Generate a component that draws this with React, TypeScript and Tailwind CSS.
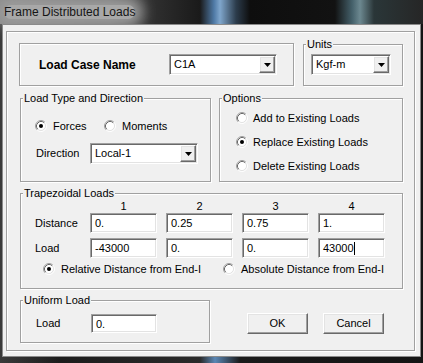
import React from 'react';

const etched = "border border-[#a0a0a0] shadow-[inset_1px_1px_0_#fff,1px_1px_0_#fff]";
const sunken =
  "border border-t-[#a0a0a0] border-l-[#a0a0a0] border-r-white border-b-white shadow-[inset_1px_1px_0_#696969,inset_-1px_-1px_0_#e3e3e3]";
const raised =
  "border border-t-white border-l-white border-r-[#696969] border-b-[#696969] shadow-[inset_-1px_-1px_0_#a0a0a0,inset_1px_1px_0_#e3e3e3]";

function RadioDot({ checked }: { checked?: boolean }) {
  return (
    <svg width="12" height="12" viewBox="0 0 12 12" className="shrink-0">
      <circle cx="6" cy="6" r="4.5" fill="#fff" />
      <path d="M2.11 9.89 A5.5 5.5 0 0 1 9.89 2.11" fill="none" stroke="#a0a0a0" />
      <path d="M9.89 2.11 A5.5 5.5 0 0 1 2.11 9.89" fill="none" stroke="#fff" />
      <path d="M2.82 9.18 A4.5 4.5 0 0 1 9.18 2.82" fill="none" stroke="#696969" />
      <path d="M9.18 2.82 A4.5 4.5 0 0 1 2.82 9.18" fill="none" stroke="#e3e3e3" />
      {checked && <circle cx="6" cy="6" r="2" fill="#000" />}
    </svg>
  );
}

function Radio({ label, checked, className = '', gap = 'ml-[6px]' }: { label: string; checked?: boolean; className?: string; gap?: string }) {
  return (
    <div className={`flex items-center h-[14px] ${className}`}>
      <RadioDot checked={checked} />
      <span className={`${gap} whitespace-nowrap leading-[14px]`}>{label}</span>
    </div>
  );
}

function TextBox({ value, className = '', caret }: { value: string; className?: string; caret?: boolean }) {
  return (
    <div className={`${sunken} bg-white flex items-center pl-[4px] ${className}`}>
      <span className="leading-[14px]">{value}</span>
      {caret && <span className="w-px h-[13px] bg-black" />}
    </div>
  );
}

function Combo({ value, className = '' }: { value: string; className?: string }) {
  return (
    <div className={`${sunken} bg-white h-[21px] flex p-[1px] ${className}`}>
      <span className="flex-1 pl-[3px] leading-[17px]">{value}</span>
      <div className={`${raised} w-[16px] bg-[#f0f0f0] flex items-center justify-center`}>
        <svg width="7" height="4" viewBox="0 0 7 4">
          <polygon points="0,0 7,0 3.5,4" fill="#000" />
        </svg>
      </div>
    </div>
  );
}

function Group({ title, className = '', children }: { title: string; className?: string; children?: React.ReactNode }) {
  return (
    <fieldset className={`${etched} ${className}`}>
      <legend className="ml-[2px] px-[1px] bg-[#f0f0f0] leading-[13px]">{title}</legend>
      {children}
    </fieldset>
  );
}

function PushButton({ label, className = '' }: { label: string; className?: string }) {
  return (
    <div className={`${raised} bg-[#f0f0f0] w-[61px] h-[21px] flex items-center justify-center ${className}`}>
      {label}
    </div>
  );
}

export default function App() {
  return (
    <div className="w-[423px] h-[363px] bg-[linear-gradient(90deg,#3a3a3a_0px,#1c1c1c_60px,#2a2a2a_200px,#5a86b4_215px,#1a1a1a_240px,#141414_423px)] flex flex-col font-['Liberation_Sans',Arial,sans-serif] text-[11px] text-black overflow-hidden">
      {/* title bar */}
      <div className="h-[24px] shrink-0 flex items-center pl-[4px] pb-[1px] bg-[linear-gradient(90deg,#8a8a8a_0px,#6a6a6a_110px,#303030_150px,#1a1a1a_200px,#4f7aa6_214px,#7fa6cc_220px,#2c3c4c_236px,#0e0e0e_250px,#121212_335px,#44606a_352px,#6c8890_360px,#2a3638_374px,#262626_423px)]">
        <span className="text-[12px] text-[#151515] bg-[#a8a8a8] rounded-full shadow-[0_0_14px_8px_#9c9c9c] leading-[14px]">
          Frame Distributed Loads
        </span>
      </div>

      {/* client area */}
      <div className="flex-1 flex px-[2px] pb-[6px]">
        <div className="flex-1 flex bg-[#f0f0f0] border border-[#8a8a8a]">
          <div className={`${etched} flex-1 ml-[3px] mr-[5px] mt-[6px] mb-[5px] flex flex-col`}>
            {/* row 1 */}
            <div className="flex items-end mt-[6px] ml-[12px]">
              <div className={`${etched} w-[275px] h-[43px] flex items-center`}>
                <span className="font-bold text-[12px] pl-[19px] w-[149px]">Load Case Name</span>
                <Combo value="C1A" className="w-[108px]" />
              </div>
              <Group title="Units" className="ml-[9px] w-[100px] h-[48px]">
                <Combo value="Kgf-m" className="w-[80px] ml-[7px] mt-[3px]" />
              </Group>
            </div>

            {/* row 2 */}
            <div className="flex mt-[6px] ml-[13px]">
              <Group title="Load Type and Direction" className="w-[191px] h-[90px]">
                <div className="flex mt-[14px] pl-[14px]">
                  <Radio label="Forces" checked className="w-[69px]" />
                  <Radio label="Moments" />
                </div>
                <div className="flex items-center mt-[10px] pl-[15px]">
                  <span className="w-[54px]">Direction</span>
                  <Combo value="Local-1" className="w-[108px]" />
                </div>
              </Group>
              <Group title="Options" className="ml-[8px] w-[184px] h-[90px]">
                <div className="flex flex-col gap-[10px] mt-[6px] pl-[16px]">
                  <Radio label="Add to Existing Loads" gap="ml-[5px]" />
                  <Radio label="Replace Existing Loads" checked gap="ml-[5px]" />
                  <Radio label="Delete Existing Loads" gap="ml-[5px]" />
                </div>
              </Group>
            </div>

            {/* row 3 */}
            <Group title="Trapezoidal Loads" className="mt-[5px] ml-[13px] w-[383px] h-[102px]">
              <div className="flex gap-[9px] pl-[69px] h-[12px] leading-[12px]">
                {['1', '2', '3', '4'].map((n) => (
                  <span key={n} className="w-[67px] text-center">
                    {n}
                  </span>
                ))}
              </div>
              <div className="flex items-center mt-[1px] pl-[14px]">
                <span className="w-[55px]">Distance</span>
                <div className="flex gap-[9px]">
                  {['0.', '0.25', '0.75', '1.'].map((v, i) => (
                    <TextBox key={i} value={v} className="w-[67px] h-[20px]" />
                  ))}
                </div>
              </div>
              <div className="flex items-center mt-[5px] pl-[14px]">
                <span className="w-[55px]">Load</span>
                <div className="flex gap-[9px]">
                  {['-43000', '0.', '0.', '43000'].map((v, i) => (
                    <TextBox key={i} value={v} caret={i === 3} className="w-[67px] h-[20px]" />
                  ))}
                </div>
              </div>
              <div className="flex mt-[4px] pl-[22px]">
                <Radio label="Relative Distance from End-I" checked className="w-[180px]" />
                <Radio label="Absolute Distance from End-I" />
              </div>
            </Group>

            {/* row 4 */}
            <div className="flex mt-[5px] ml-[13px]">
              <Group title="Uniform Load" className="w-[190px] h-[49px]">
                <div className="flex items-center mt-[7px] pl-[15px]">
                  <span className="w-[55px]">Load</span>
                  <TextBox value="0." className="w-[66px] h-[19px]" />
                </div>
              </Group>
              <div className="flex ml-[37px] mt-[19px] gap-[15px] items-start">
                <PushButton label="OK" />
                <PushButton label="Cancel" />
              </div>
            </div>
          </div>
        </div>
      </div>
    </div>
  );
}
